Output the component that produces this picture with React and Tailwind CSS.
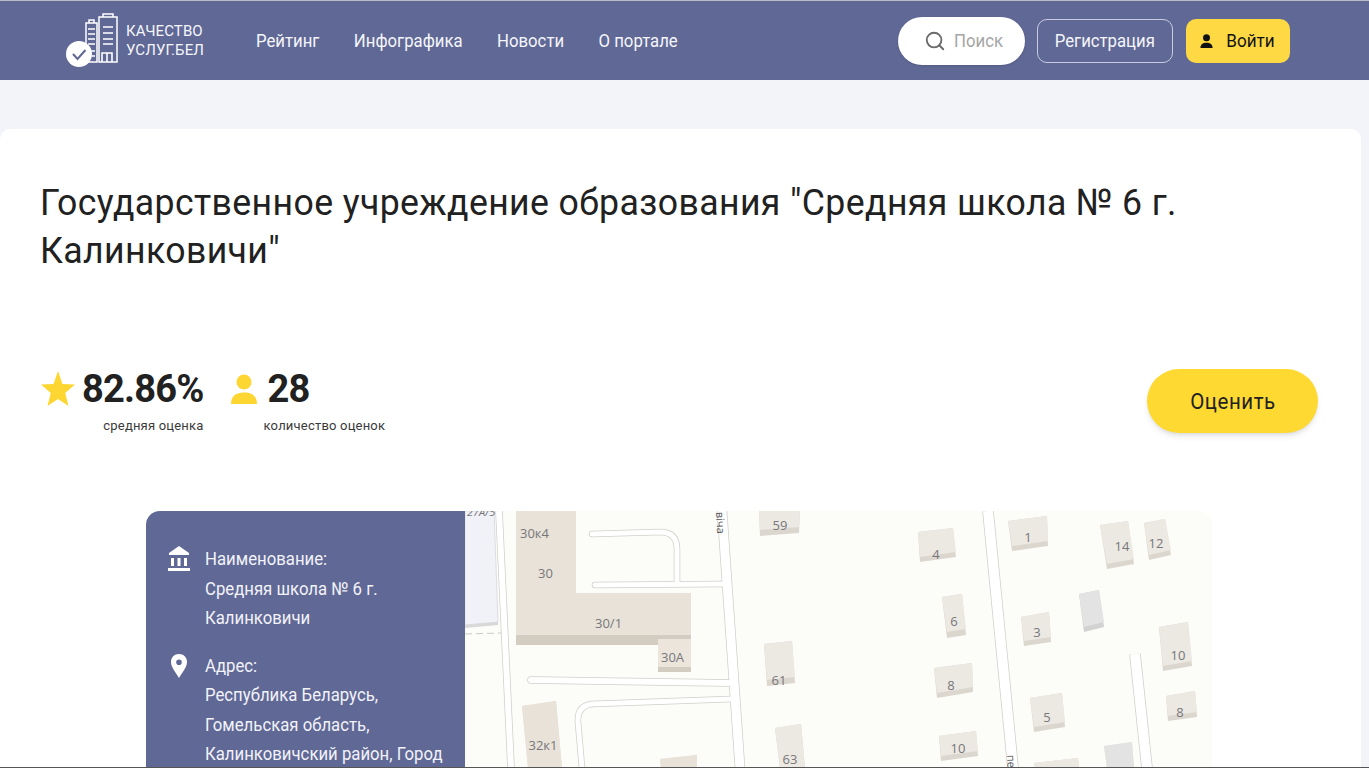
import { Search } from 'lucide-react';

const buildings = [
  { pts: [[918, 532], [953, 528], [956, 557], [920, 562]], h: 5, label: '4', at: [936, 559] },
  { pts: [[942, 597], [962, 594], [966, 635], [947, 638]], h: 6, label: '6', at: [954, 626] },
  { pts: [[934, 668], [972, 663], [973, 692], [937, 698]], h: 5, label: '8', at: [951, 690] },
  { pts: [[939, 736], [976, 731], [978, 756], [941, 761]], h: 5, label: '10', at: [958, 753] },
  { pts: [[1008, 521], [1047, 516], [1048, 546], [1012, 551]], h: 5, label: '1', at: [1028, 542] },
  { pts: [[1100, 525], [1128, 521], [1134, 564], [1107, 569]], h: 5, label: '14', at: [1122, 551] },
  { pts: [[1144, 523], [1165, 519], [1171, 555], [1149, 560]], h: 5, label: '12', at: [1156, 548] },
  { pts: [[1079, 594], [1099, 590], [1104, 627], [1084, 632]], h: 5, fill: '#e3e3e3', side: '#d2d2d2' },
  { pts: [[1021, 617], [1049, 612], [1051, 642], [1024, 646]], h: 5, label: '3', at: [1037, 637] },
  { pts: [[1159, 627], [1188, 622], [1192, 666], [1163, 671]], h: 5, label: '10', at: [1178, 660] },
  { pts: [[1166, 696], [1195, 691], [1197, 717], [1168, 721]], h: 5, label: '8', at: [1180, 717] },
  { pts: [[1030, 698], [1062, 693], [1065, 727], [1034, 732]], h: 5, label: '5', at: [1047, 722] },
  { pts: [[1104, 746], [1132, 742], [1134, 768], [1107, 768]], h: 0, fill: '#e3e3e3', side: '#e3e3e3' },
  { pts: [[1034, 763], [1078, 758], [1079, 768], [1035, 768]], h: 0 },
  { pts: [[759, 511], [800, 511], [799, 533], [760, 536]], h: 6, label: '59', at: [780, 530] },
  { pts: [[764, 644], [792, 641], [795, 683], [767, 686]], h: 6, label: '61', at: [779, 685] },
  { pts: [[775, 728], [801, 724], [805, 768], [780, 768]], h: 0, label: '63', at: [790, 764] },
  { pts: [[522, 706], [556, 701], [562, 768], [528, 768]], h: 0, fill: '#e8e2d8', side: '#e8e2d8', label: '32к1', at: [543, 750] },
  { pts: [[660, 759], [697, 755], [697, 768], [661, 768]], h: 0, fill: '#e8e2d8', side: '#e8e2d8' },
];

const roads = [
  { d: 'M499 511 L511 768', w: 6 },
  { d: 'M592 534 L660 532 Q677 532 677 549 L677 582', w: 5, round: true },
  { d: 'M595 585 L724 584', w: 5, round: true },
  { d: 'M531 680 L730 683', w: 6, round: true },
  { d: 'M732 699 L592 704 Q577 706 578 722 L582 768', w: 5 },
  { d: 'M722 511 L740 768', w: 9 },
  { d: 'M988 511 L1013 768', w: 10 },
  { d: 'M1135 654 L1147 768', w: 10 },
];

const toPoints = (list) => list.map((p) => p.join(',')).join(' ');

function MapView() {
  return (
    <svg viewBox="465 511 747 257" className="block h-full w-full" style={{ fontFamily: '"Open Sans", sans-serif' }}>
      <rect x="465" y="511" width="747" height="257" fill="#fcfcf8" />
      {/* neighbouring plot on the left edge */}
      <polygon points="465,511 494,511 498,622 465,625" fill="#f1f2f7" stroke="#dcdde2" />
      <polygon points="465,625 498,622 498,625 465,628" fill="#d8d8d8" />
      <path d="M465 634 L503 633" stroke="#c9c9c9" strokeDasharray="7 4" fill="none" />
      <text x="467" y="516" fontSize="11" fill="#77777c" fontStyle="italic">27А/5</text>

      {roads.map((r) => (
        <path key={r.d} d={r.d} fill="none" stroke="#cfcfcc" strokeWidth={r.w + 1.5} strokeLinecap={r.round ? 'round' : 'butt'} />
      ))}
      {roads.map((r) => (
        <path key={r.d + 'w'} d={r.d} fill="none" stroke="#ffffff" strokeWidth={r.w} strokeLinecap={r.round ? 'round' : 'butt'} />
      ))}

      {/* school block */}
      <polygon points="516,625 691,625 691,645 516,645" fill="#d3ccc1" />
      <polygon points="516,511 576,511 576,593 691,593 691,635 516,635" fill="#e8e2d8" />
      <polygon points="658,639 691,639 691,672 658,672" fill="#d3ccc1" />
      <polygon points="658,639 691,639 691,667 658,667" fill="#ebe5dc" />
      <text x="520" y="538" fontSize="13" fill="#77777c">30к4</text>
      <text x="538" y="578" fontSize="13" fill="#77777c">30</text>
      <text x="595" y="628" fontSize="13" fill="#77777c">30/1</text>
      <text x="661" y="662" fontSize="13" fill="#77777c">30А</text>

      {buildings.map((b, i) => {
        const [tl, tr, br, bl] = b.pts;
        const top = [tl, tr, [br[0], br[1] - b.h], [bl[0], bl[1] - b.h]];
        return (
          <g key={i}>
            <polygon points={toPoints(b.pts)} fill={b.side || '#dcd7ce'} />
            <polygon points={toPoints(top)} fill={b.fill || '#ece8e2'} />
            {b.label && (
              <text x={b.at[0]} y={b.at[1]} fontSize="13" textAnchor="middle" fill="#77777c">{b.label}</text>
            )}
          </g>
        );
      })}

      <text x="0" y="0" fontSize="11" fill="#55555a" transform="translate(716 512) rotate(87)">вiча</text>
      <text x="0" y="0" fontSize="11" fill="#55555a" transform="translate(1007 755) rotate(87)">пе</text>
    </svg>
  );
}

function Logo() {
  return (
    <svg width="52" height="56" viewBox="0 0 52 56" className="shrink-0">
      <g fill="none" stroke="#fff" strokeWidth="1.5">
        <rect x="33" y="4" width="18" height="45" />
        <path d="M37 4 V1 H47 V4" />
        <path d="M20 49 V10 H31 V49 H20" />
        <path d="M23 10 V7 H28 V10" />
      </g>
      <g stroke="#fff" strokeWidth="1.6" fill="none">
        <path d="M37 14 H47 M37 20 H47 M37 26 H47 M37 31 H47" />
        <path d="M22 16 H29 M22 21 H29 M22 26 H29 M22 31 H29 M24 38 H29 M26 43 H29" />
        <path d="M36 49 V40 H46 V49 M41 40 V49" />
      </g>
      <circle cx="13" cy="41" r="13" fill="#fff" />
      <path d="M7 41 L11.5 46 L19.5 37" fill="none" stroke="#606896" strokeWidth="2" />
    </svg>
  );
}

const PersonIcon = ({ className }) => (
  <svg viewBox="0 0 26 30" className={className} fill="currentColor">
    <circle cx="13" cy="8" r="7.5" />
    <path d="M0 30 C0 22 5 18.5 13 18.5 C21 18.5 26 22 26 30 Z" />
  </svg>
);

const StarIcon = () => (
  <svg width="34" height="36" viewBox="0 0 34 36" fill="#fed631" className="ml-px shrink-0">
    <path d="M17 0 L21.5 13 L34 13.5 L24.2 22 L27.5 35 L17 28 L6.5 35 L9.8 22 L0 13.5 L12.5 13 Z" />
  </svg>
);

const BankIcon = () => (
  <svg width="22" height="26" viewBox="0 0 22 26" fill="#fff">
    <path d="M11 0 L21 7 V9 H1 V7 Z" />
    <rect x="3" y="12" width="3" height="8" />
    <rect x="9.5" y="12" width="3" height="8" />
    <rect x="16" y="12" width="3" height="8" />
    <rect x="0" y="22" width="22" height="3" />
  </svg>
);

const PinIcon = () => (
  <svg width="16" height="24" viewBox="0 0 16 24">
    <path fillRule="evenodd" fill="#fff" d="M8 0 C12.6 0 16 3.4 16 8 C16 13 11 19 8 24 C5 19 0 13 0 8 C0 3.4 3.4 0 8 0 Z M8 5.5 A2.8 2.8 0 1 0 8 11.1 A2.8 2.8 0 1 0 8 5.5 Z" />
  </svg>
);

function Stat({ icon, value, label, labelClass }) {
  return (
    <div className="flex flex-col">
      <div className="flex items-center gap-[7px]">
        {icon}
        <span className="text-[38px] font-bold leading-[40px] tracking-[-0.8px] text-[#212121]">{value}</span>
      </div>
      <span className={`mt-[8px] text-[13px] leading-[18px] tracking-[0.2px] text-[#3a3a3a] ${labelClass}`}>{label}</span>
    </div>
  );
}

function InfoBlock({ icon, lines }) {
  return (
    <div className="flex">
      <div className="flex h-[30px] w-[53px] shrink-0 items-center justify-center">{icon}</div>
      <div className="origin-left scale-x-[0.93] text-[18px] leading-[29.5px] text-[#f2f3f8]">
        {lines.map((line) => (
          <div key={line} className="whitespace-nowrap">{line}</div>
        ))}
      </div>
    </div>
  );
}

export default function App() {
  return (
    <div className="flex h-[768px] flex-col overflow-hidden bg-[#f3f4f9]" style={{ fontFamily: 'Roboto, sans-serif' }}>
      <header className="flex h-[80px] shrink-0 items-center justify-between border-t border-[#b8bcc8] bg-[#606896] pl-[66px] pr-[79px]">
        <div className="flex items-center">
          <div className="flex items-center gap-[8px]">
            <Logo />
            <div className="text-[15px] leading-[19px] tracking-[0.1px] text-[#f5f6fa]">
              <div>КАЧЕСТВО</div>
              <div>УСЛУГ.БЕЛ</div>
            </div>
          </div>
          <nav className="ml-[52px] flex origin-left scale-x-[0.93] items-center gap-[37px] text-[18px] text-[#f5f6fa]">
            <span>Рейтинг</span>
            <span>Инфографика</span>
            <span>Новости</span>
            <span>О портале</span>
          </nav>
        </div>
        <div className="flex items-center">
          <div className="flex h-[48px] w-[127px] items-center justify-center gap-[8px] rounded-[24px] bg-white pl-[3px] text-[18px] text-[#a5a5a5] shadow-sm">
            <Search size={22} strokeWidth={2} className="text-[#6a6a6a]" />
            <span className="inline-block w-[48px] origin-left scale-x-[0.93]">Поиск</span>
          </div>
          <button className="ml-[12px] flex h-[44px] w-[136px] items-center justify-center rounded-[10px] border border-[#c9cce0] text-[18px] text-[#f5f6fa]">
            <span className="scale-x-[0.93]">Регистрация</span>
          </button>
          <button className="ml-[13px] flex h-[44px] w-[104px] items-center justify-center gap-[12px] rounded-[10px] bg-[#fed944] text-[18px] text-[#111]">
            <PersonIcon className="h-[14px] w-[13px] text-[#111]" />
            <span className="scale-x-[0.95]">Войти</span>
          </button>
        </div>
      </header>

      <main className="mr-[8px] mt-[49px] min-h-0 flex-1 overflow-hidden rounded-t-[10px] bg-white">
        <div className="pl-[40px] pr-[43px] pt-[50px]">
          <h1 className="w-[1200px] origin-left scale-x-[0.963] text-[37px] font-normal leading-[48px] tracking-[0.4px] text-[#212121]">
            Государственное учреждение образования "Средняя школа № 6 г. Калинковичи"
          </h1>
          <div className="mt-[94px] flex items-start justify-between">
            <div className="flex items-start gap-[27px]">
              <Stat icon={<StarIcon />} value="82.86%" label="средняя оценка" labelClass="self-end" />
              <Stat icon={<PersonIcon className="mr-[4px] h-[30px] w-[26px] text-[#fed631]" />} value="28" label="количество оценок" labelClass="ml-[33px]" />
            </div>
            <button className="h-[64px] w-[171px] rounded-[32px] bg-[#fed931] text-[22px] tracking-[0.6px] text-[#212121] shadow-md">
              <span className="inline-block scale-x-[0.93]">Оценить</span>
            </button>
          </div>
        </div>
        <div className="ml-[146px] mt-[76px] flex h-[400px] w-[1066px]">
          <aside className="flex w-[319px] shrink-0 flex-col gap-[18px] rounded-tl-[14px] bg-[#606896] pl-[6px] pt-[33px]">
            <InfoBlock icon={<BankIcon />} lines={['Наименование:', 'Средняя школа № 6 г.', 'Калинковичи']} />
            <InfoBlock icon={<PinIcon />} lines={['Адрес:', 'Республика Беларусь,', 'Гомельская область,', 'Калинковичский район, Город']} />
          </aside>
          <div className="h-[257px] flex-1 overflow-hidden rounded-tr-[14px]">
            <MapView />
          </div>
        </div>
      </main>
      <div className="h-px shrink-0 bg-[#555]" />
    </div>
  );
}
